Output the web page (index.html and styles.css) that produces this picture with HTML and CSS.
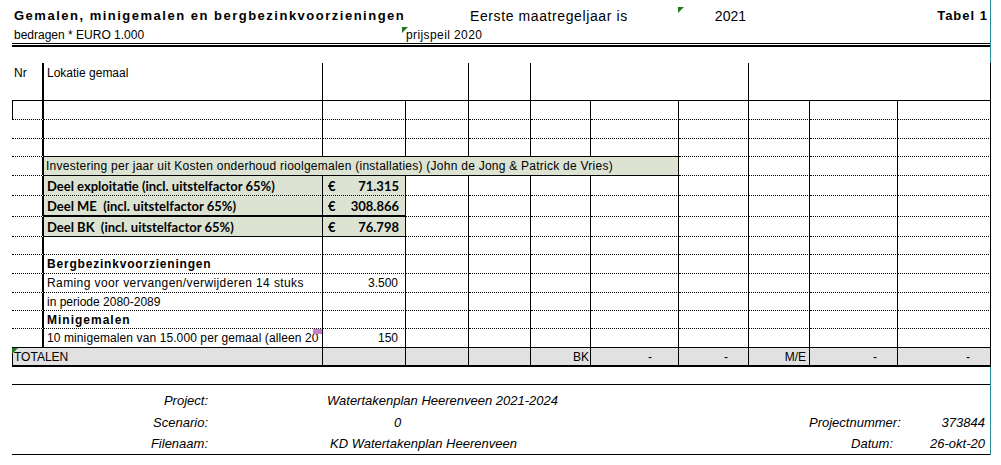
FILE: index.html
```html
<!DOCTYPE html>
<html lang="nl">
<head>
<meta charset="utf-8">
<title>Gemalen, minigemalen en bergbezinkvoorzieningen</title>
<link rel="stylesheet" href="styles.css">
</head>
<body>
<div class="sheet">
  <div class="trow t1">
    <div class="title">Gemalen, minigemalen en bergbezinkvoorzieningen</div>
    <div class="eerste">Eerste maatregeljaar is</div>
    <div class="jaar"><span class="tri tri-jaar"></span>2021</div>
    <div class="tabel">Tabel 1</div>
  </div>
  <div class="trow t2">
    <div class="bedragen">bedragen * EURO 1.000</div>
    <div class="prijs"><span class="tri tri-prijs"></span>prijspeil 2020</div>
  </div>
  <div class="dbl"></div>

  <div class="grid">
    <div class="row hdr">
      <div class="c n">Nr</div>
      <div class="c">Lokatie gemaal</div>
      <div class="c s2"></div>
      <div class="c"></div>
      <div class="c s3"></div>
      <div class="c s3"></div>
    </div>

    <div class="row">
      <div class="c n lb"></div><div class="c"></div><div class="c"></div><div class="c"></div><div class="c"></div><div class="c"></div><div class="c"></div><div class="c"></div><div class="c"></div><div class="c"></div><div class="c"></div>
    </div>
    <div class="row">
      <div class="c n"></div><div class="c"></div><div class="c"></div><div class="c"></div><div class="c"></div><div class="c"></div><div class="c"></div><div class="c"></div><div class="c"></div><div class="c"></div><div class="c"></div>
    </div>
    <div class="row h18">
      <div class="c n"></div><div class="c bs"></div><div class="c bs"></div><div class="c bs"></div><div class="c bs"></div><div class="c bs"></div><div class="c bs"></div><div class="c"></div><div class="c"></div><div class="c"></div><div class="c"></div>
    </div>
    <div class="row">
      <div class="c n"></div>
      <div class="c s6 g bs inv">Investering per jaar uit Kosten onderhoud rioolgemalen (installaties) (John de Jong &amp; Patrick de Vries)</div>
      <div class="c"></div><div class="c"></div><div class="c"></div><div class="c"></div>
    </div>
    <div class="row h20">
      <div class="c n"></div>
      <div class="c g d">Deel exploitatie (incl. uitstelfactor 65%)</div>
      <div class="c g d eur"><span>€</span><span>71.315</span></div>
      <div class="c"></div><div class="c"></div><div class="c"></div><div class="c"></div><div class="c"></div><div class="c"></div><div class="c"></div><div class="c"></div>
    </div>
    <div class="row h21">
      <div class="c n"></div>
      <div class="c g d bs2">Deel ME&nbsp; (incl. uitstelfactor 65%)</div>
      <div class="c g d eur bs2"><span>€</span><span>308.866</span></div>
      <div class="c"></div><div class="c"></div><div class="c"></div><div class="c"></div><div class="c"></div><div class="c"></div><div class="c"></div><div class="c"></div>
    </div>
    <div class="row h20">
      <div class="c n"></div>
      <div class="c g d bs">Deel BK&nbsp; (incl. uitstelfactor 65%)</div>
      <div class="c g d eur bs"><span>€</span><span>76.798</span></div>
      <div class="c"></div><div class="c"></div><div class="c"></div><div class="c"></div><div class="c"></div><div class="c"></div><div class="c"></div><div class="c"></div>
    </div>
    <div class="row h18">
      <div class="c n"></div><div class="c"></div><div class="c"></div><div class="c"></div><div class="c"></div><div class="c"></div><div class="c"></div><div class="c"></div><div class="c"></div><div class="c"></div><div class="c"></div>
    </div>
    <div class="row">
      <div class="c n"></div>
      <div class="c b">Bergbezinkvoorzieningen</div>
      <div class="c"></div><div class="c"></div><div class="c"></div><div class="c"></div><div class="c"></div><div class="c"></div><div class="c"></div><div class="c"></div><div class="c"></div>
    </div>
    <div class="row">
      <div class="c n"></div>
      <div class="c sp">Raming voor vervangen/verwijderen 14 stuks</div>
      <div class="c r">3.500</div>
      <div class="c"></div><div class="c"></div><div class="c"></div><div class="c"></div><div class="c"></div><div class="c"></div><div class="c"></div><div class="c"></div>
    </div>
    <div class="row h18">
      <div class="c n"></div>
      <div class="c">in periode 2080-2089</div>
      <div class="c"></div><div class="c"></div><div class="c"></div><div class="c"></div><div class="c"></div><div class="c"></div><div class="c"></div><div class="c"></div><div class="c"></div>
    </div>
    <div class="row h18">
      <div class="c n"></div>
      <div class="c b mini">Minigemalen</div>
      <div class="c"></div><div class="c"></div><div class="c"></div><div class="c"></div><div class="c"></div><div class="c"></div><div class="c"></div><div class="c"></div><div class="c"></div>
    </div>
    <div class="row">
      <div class="c n bs"></div>
      <div class="c bs clip"><span class="cliptext">10 minigemalen van 15.000 per gemaal (alleen 20</span><span class="mark"></span></div>
      <div class="c bs r">150</div>
      <div class="c bs"></div><div class="c bs"></div><div class="c bs"></div><div class="c bs"></div><div class="c bs"></div><div class="c bs"></div><div class="c bs"></div><div class="c bs"></div>
    </div>
    <div class="row tot">
      <div class="c s2 lb totlabel"><span class="tri tri-tot"></span>TOTALEN</div>
      <div class="c"></div>
      <div class="c"></div>
      <div class="c"></div>
      <div class="c r bk">BK</div>
      <div class="c r dash dash-wide">-</div>
      <div class="c r dash">-</div>
      <div class="c r me">M/E</div>
      <div class="c r dash">-</div>
      <div class="c r dash">-</div>
    </div>
  </div>

  <div class="foot">
    <div class="frow f1">
      <div class="lab">Project:</div>
      <div class="val v1">Watertakenplan Heerenveen 2021-2024</div>
    </div>
    <div class="frow f2">
      <div class="lab">Scenario:</div>
      <div class="val v2">0</div>
      <div class="lab2">Projectnummer:</div>
      <div class="num">373844</div>
    </div>
    <div class="frow f3">
      <div class="lab">Filenaam:</div>
      <div class="val v3">KD Watertakenplan Heerenveen</div>
      <div class="lab2">Datum:</div>
      <div class="num">26-okt-20</div>
    </div>
  </div>
</div>
</body>
</html>
```

FILE: styles.css
```css
* { box-sizing: border-box; }

html, body {
  margin: 0;
  background: #ffffff;
}

body {
  font-family: "Liberation Sans", Arial, sans-serif;
  color: #000;
}

.sheet {
  --cols: 32px 279px 83px 63px 62px 60px 88px 70px 61px 88px 93px;
  width: 979px;
  margin-left: 12px;
  border-right: 1px solid #2a8b98;
}

/* ---------- top title rows ---------- */
.trow {
  display: grid;
  grid-template-columns: var(--cols);
  width: 978px;
  white-space: nowrap;
}

.t1 {
  height: 24px;
  align-items: end;
  font-size: 14px;
  line-height: 16px;
}

.title {
  grid-column: 1 / span 4;
  padding-left: 2px;
  font-size: 13px;
  font-weight: bold;
  letter-spacing: 1.5px;
}

.eerste {
  grid-column: 5 / span 3;
  padding-left: 1px;
  letter-spacing: 0.6px;
}

.jaar {
  grid-column: 8;
  position: relative;
  text-align: right;
  padding-right: 3px;
}

.tabel {
  grid-column: 11;
  text-align: right;
  padding-right: 3px;
  font-size: 13px;
  font-weight: bold;
  letter-spacing: 1px;
}

.t2 {
  height: 19px;
  align-items: end;
  padding-bottom: 1px;
  font-size: 12px;
  line-height: 14px;
}

.bedragen {
  grid-column: 1 / span 3;
  padding-left: 2px;
}

.prijs {
  grid-column: 4 / span 2;
  position: relative;
  letter-spacing: 0.4px;
}

.tri {
  position: absolute;
  width: 0;
  height: 0;
  border-top: 6px solid #1f7a1f;
  border-right: 6px solid transparent;
}

.tri-jaar { left: -1px; top: -1px; }
.tri-prijs { left: -4px; top: -1px; }
.tri-tot { left: -1px; top: 0; }

.dbl {
  width: 978px;
  height: 4px;
  border-top: 1px solid #000;
  border-bottom: 2px solid #000;
  margin-bottom: 16px;
}

/* ---------- spreadsheet grid ---------- */
.row {
  display: grid;
  grid-template-columns: var(--cols);
  width: 979px;
  height: 19px;
  font-size: 12px;
  line-height: 14px;
}

.h18 { height: 18px; }
.h20 { height: 20px; }
.h21 { height: 21px; }

.c {
  display: flex;
  align-items: center;
  min-width: 0;
  padding: 0 3px;
  white-space: nowrap;
  border-right: 1px solid #000;
  border-bottom: 1px dotted #000;
}

.c.n {
  border-right-width: 2px;
  padding-left: 2px;
}

.lb { border-left: 1px solid #000; }

.s2 { grid-column: span 2; }
.s3 { grid-column: span 3; }
.s6 { grid-column: span 6; }

.bs { border-bottom-style: solid; }
.bs2 { border-bottom: 2px solid #000; }

.r {
  justify-content: flex-end;
  padding-right: 7px;
}

.hdr {
  height: 38px;
}

.hdr .c {
  align-items: flex-start;
  padding-top: 3px;
  border-bottom: 1px solid #000;
}

.g { background: #dce3d3; }

.inv {
  padding-left: 2px;
  letter-spacing: 0.25px;
}

.d {
  font-family: Lato, "Liberation Sans", sans-serif;
  font-weight: bold;
  font-size: 13px;
}

.eur {
  justify-content: space-between;
  padding: 0 6px 0 5px;
}

.b {
  font-weight: bold;
  letter-spacing: 0.8px;
}

.mini { letter-spacing: 1px; }

.sp { letter-spacing: 0.4px; }

.clip {
  position: relative;
  overflow: hidden;
}

.cliptext { letter-spacing: 0.1px; }

.mark {
  position: absolute;
  right: 0;
  top: 0;
  width: 9px;
  height: 5px;
  background: #c77fcc;
}

.tot .c {
  background: #e1e1e1;
  border-bottom: 2px solid #000;
}

.totlabel {
  position: relative;
  padding-left: 1px;
}

.bk { padding-right: 1px; }
.me { padding-right: 3px; }
.dash { padding-right: 20px; }
.dash-wide { padding-right: 26px; }

/* ---------- footer ---------- */
.foot {
  width: 978px;
  margin-top: 17px;
  padding: 4px 0 1px;
  border-top: 1px solid #000;
  border-bottom: 1px solid #000;
  box-shadow: 0 1px 0 #2a8b98;
  font-family: "Liberation Sans", Arial, sans-serif;
  font-style: italic;
  font-size: 13px;
  white-space: nowrap;
}

.frow {
  display: grid;
  grid-template-columns: 199px 111px 208px 1fr 88px 93px;
  align-items: center;
  height: 22px;
}

.f3 { height: 20px; }

.lab {
  grid-column: 1;
  text-align: right;
  padding-right: 3px;
}

.val { grid-column: 3; }
.v1 { padding-left: 5px; }
.v2 { padding-left: 72px; }
.v3 { padding-left: 8px; }

.lab2 {
  grid-column: 5;
  text-align: right;
  padding-right: 4px;
}

.num {
  grid-column: 6;
  text-align: right;
  padding-right: 5px;
}
```
